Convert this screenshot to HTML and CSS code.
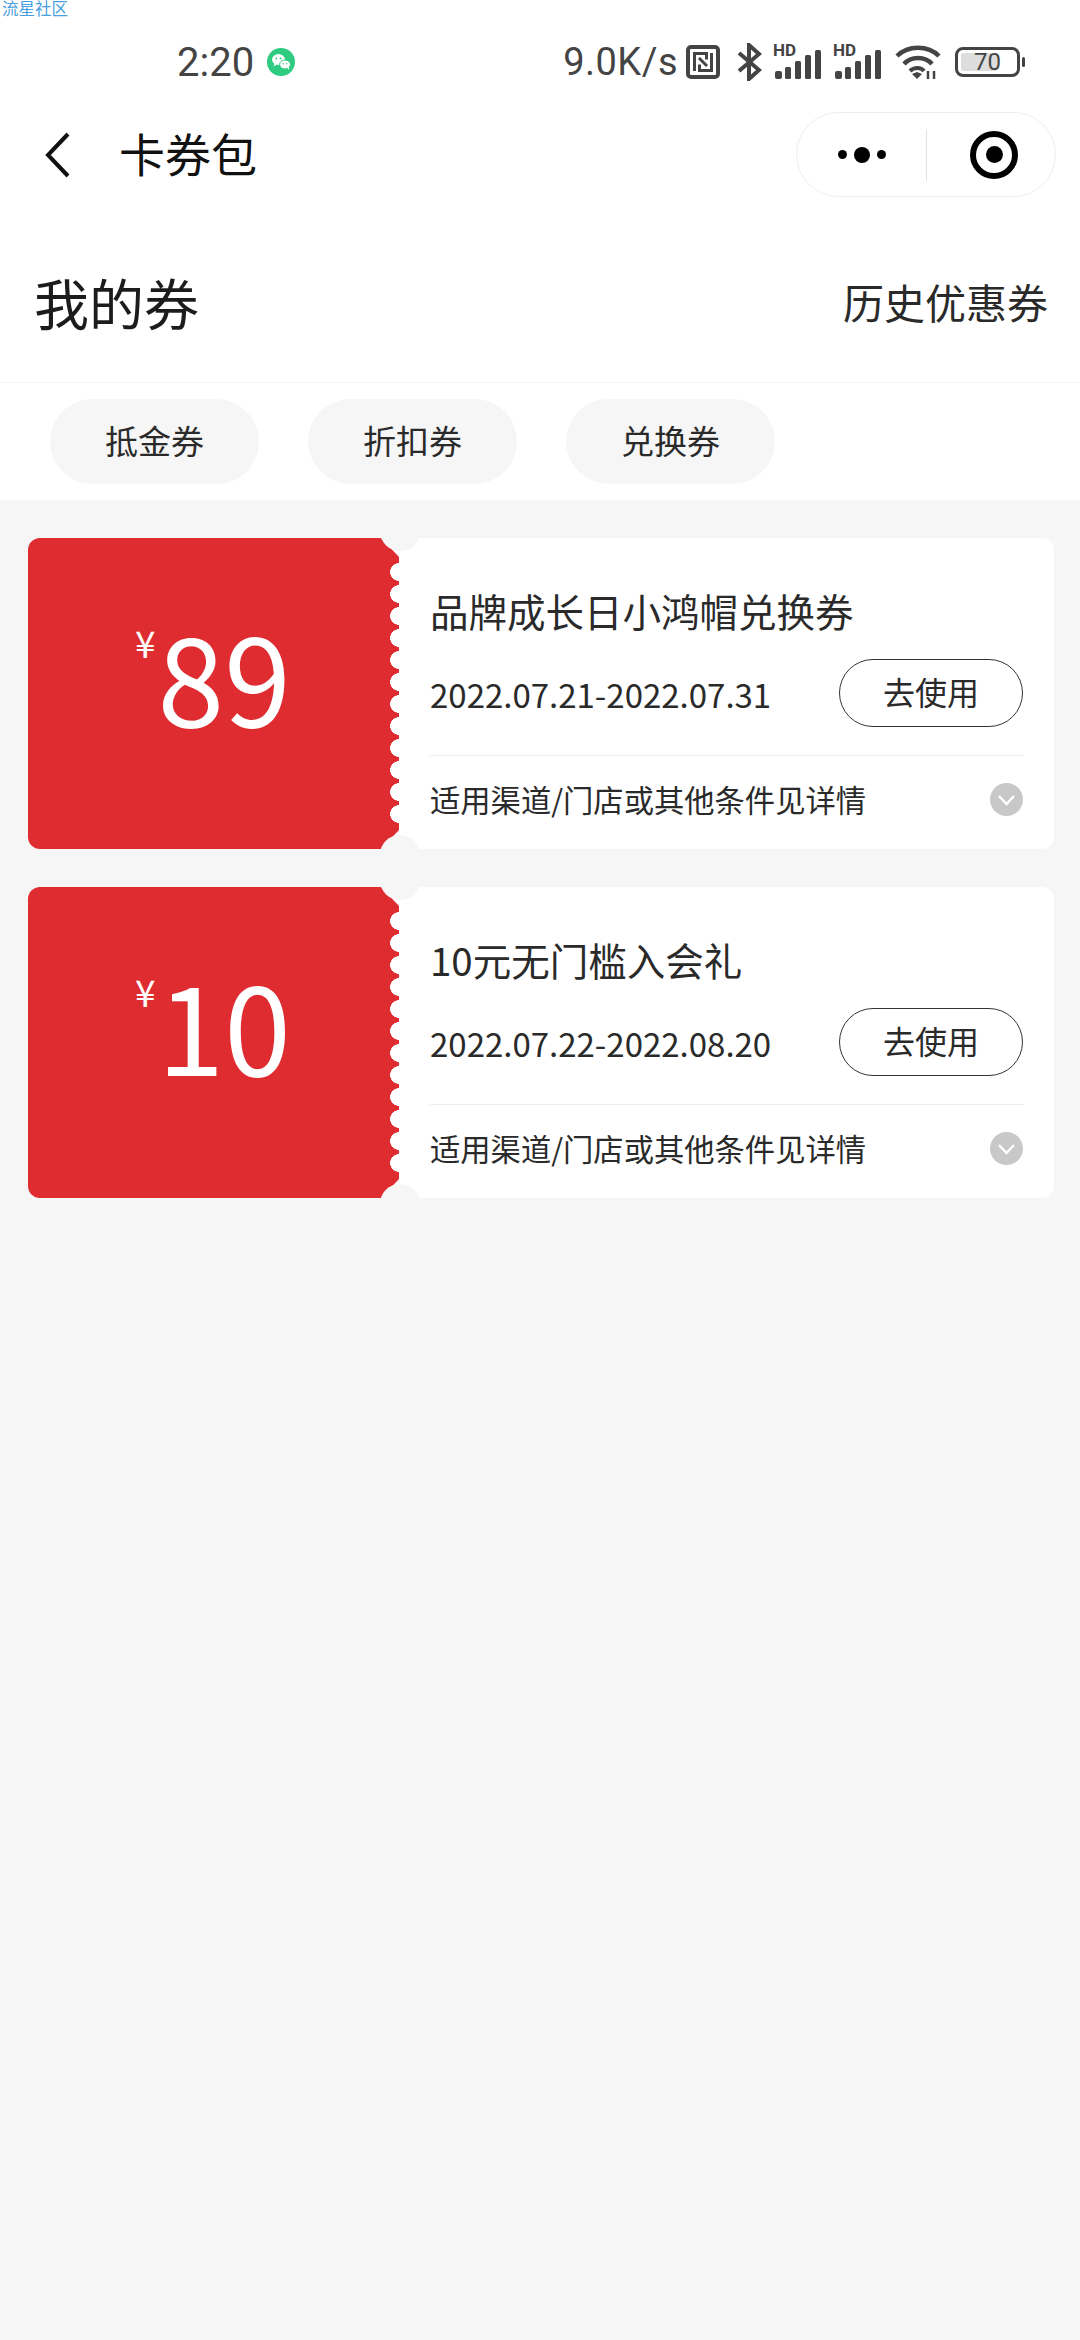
FILE: index.html
```html
<!DOCTYPE html>
<html lang="zh-CN">
<head>
    <meta charset="UTF-8">
    <meta name="viewport" content="width=device-width, initial-scale=1.0">
    <title>卡券包</title>
    <link rel="stylesheet" href="styles.css">
</head>
<body>
    <div class="watermark">流星社区</div>

    <div class="status-bar">
        <div class="status-left">
            <span class="status-time">2:20</span>
            <svg class="wechat-dot" width="28" height="28" viewBox="0 0 28 28">
                <circle cx="14" cy="14" r="14" fill="#2ecb81"/>
                <ellipse cx="11.5" cy="11.5" rx="6.5" ry="5.4" fill="#fff"/>
                <path d="M7.5 15.5l-1 3 3.4-1.8z" fill="#fff"/>
                <ellipse cx="18" cy="16.5" rx="5.4" ry="4.5" fill="#fff" stroke="#2ecb81"/>
                <path d="M20.5 20l1.5 2-.2-3z" fill="#fff"/>
                <circle cx="9.3" cy="10.5" r=".9" fill="#2ecb81"/>
                <circle cx="13.6" cy="10.5" r=".9" fill="#2ecb81"/>
                <circle cx="16.2" cy="15.8" r=".7" fill="#2ecb81"/>
                <circle cx="19.8" cy="15.8" r=".7" fill="#2ecb81"/>
            </svg>
        </div>
        <div class="status-right">
            <span class="status-speed">9.0K/s</span>
            <svg class="icon-nfc" width="34" height="34" viewBox="0 0 34 34" fill="none" stroke="#444">
                <rect x="2" y="2" width="30" height="30" rx="3" stroke-width="4"/>
                <path d="M8.500 26V8.500h12v6M25.500 8v17.500h-12v-6M13 13l8 8" stroke-width="3"/>
            </svg>
            <svg class="icon-bt" width="25" height="38" viewBox="0 0 25 38" fill="none" stroke="#444" stroke-width="4">
                <path d="M2 10l20 17-10 9V2l10 9L2 28"/>
            </svg>
            <svg class="icon-signal" width="50" height="40" viewBox="0 0 50 40">
                <text x="1" y="16" class="signal-label">HD</text>
                <g fill="#444">
                    <rect x="3" y="31" width="7" height="8" rx="2"/>
                    <rect x="13" y="27" width="6" height="12" rx="1.500"/>
                    <rect x="23" y="21" width="6" height="18" rx="1.500"/>
                    <rect x="33" y="15" width="6" height="24" rx="1.500"/>
                    <rect x="43" y="10" width="6" height="29" rx="1.500"/>
                </g>
            </svg>
            <svg class="icon-signal" width="50" height="40" viewBox="0 0 50 40">
                <text x="1" y="16" class="signal-label">HD</text>
                <g fill="#444">
                    <rect x="3" y="31" width="7" height="8" rx="2"/>
                    <rect x="13" y="27" width="6" height="12" rx="1.500"/>
                    <rect x="23" y="21" width="6" height="18" rx="1.500"/>
                    <rect x="33" y="15" width="6" height="24" rx="1.500"/>
                    <rect x="43" y="10" width="6" height="29" rx="1.500"/>
                </g>
            </svg>
            <svg class="icon-wifi" width="46" height="36" viewBox="0 0 46 36" fill="none" stroke="#444" stroke-width="4.500">
                <path d="M2 12C13 1 33 1 44 12"/>
                <path d="M9 20C16 12 30 12 37 20"/>
                <path d="M15 27c4-4 11-4 14 0" stroke-width="4"/>
                <path d="M17 30l5-2 5 2-5 5z" fill="#444" stroke="none"/>
                <path d="M33 35v-8M39 35v-8" stroke-width="2.500"/>
            </svg>
            <div class="battery">
                <div class="battery-body">
                    <span class="battery-fill"></span>
                    <span class="battery-text">70</span>
                </div>
                <span class="battery-tip"></span>
            </div>
        </div>
    </div>

    <div class="nav-bar">
        <svg class="nav-back" width="27" height="46" viewBox="0 0 27 46" fill="none" stroke="#111" stroke-width="4">
            <path d="M24 2L4 23l20 21"/>
        </svg>
        <span class="nav-title">卡券包</span>
        <div class="capsule">
            <div class="capsule-dots">
                <span class="dot"></span>
                <span class="dot dot-big"></span>
                <span class="dot"></span>
            </div>
            <span class="capsule-line"></span>
            <div class="capsule-target"><span></span></div>
        </div>
    </div>

    <div class="page-head">
        <h1>我的券</h1>
        <span class="history-link">历史优惠券</span>
    </div>

    <div class="tabs">
        <span class="tab">抵金券</span>
        <span class="tab">折扣券</span>
        <span class="tab">兑换券</span>
    </div>

    <div class="coupon-list">
        <div class="coupon">
            <div class="coupon-face">
                <span class="currency">¥</span>
                <span class="amount">89</span>
            </div>
            <div class="coupon-info">
                <div class="coupon-name">品牌成长日小鸿帽兑换券</div>
                <div class="coupon-row">
                    <span class="coupon-date">2022.07.21-2022.07.31</span>
                    <span class="use-btn">去使用</span>
                </div>
                <div class="coupon-foot">
                    <span>适用渠道/门店或其他条件见详情</span>
                    <svg width="33" height="33" viewBox="0 0 33 33">
                        <circle cx="16.500" cy="16.500" r="16.500" fill="#c8c8c8"/>
                        <path d="M9 13l7.500 8 7.500-8" fill="none" stroke="#fff" stroke-width="2.500"/>
                    </svg>
                </div>
            </div>
        </div>

        <div class="coupon">
            <div class="coupon-face">
                <span class="currency">¥</span>
                <span class="amount">10</span>
            </div>
            <div class="coupon-info">
                <div class="coupon-name">10元无门槛入会礼</div>
                <div class="coupon-row">
                    <span class="coupon-date">2022.07.22-2022.08.20</span>
                    <span class="use-btn">去使用</span>
                </div>
                <div class="coupon-foot">
                    <span>适用渠道/门店或其他条件见详情</span>
                    <svg width="33" height="33" viewBox="0 0 33 33">
                        <circle cx="16.500" cy="16.500" r="16.500" fill="#c8c8c8"/>
                        <path d="M9 13l7.500 8 7.500-8" fill="none" stroke="#fff" stroke-width="2.500"/>
                    </svg>
                </div>
            </div>
        </div>
    </div>
</body>
</html>
```

FILE: styles.css
```css
* {
    box-sizing: border-box;
}
body {
    margin: 0;
    height: 2340px;
    background-color: #f6f6f6;
    font-family: "Noto Sans CJK SC", "Noto Sans", sans-serif;
    color: #2a2a2a;
    position: relative;
    overflow: hidden;
}
.watermark {
    position: absolute;
    left: 2px;
    top: -2px;
    font-size: 16.500px;
    line-height: 20px;
    color: #4a9fe0;
}

/* status bar */
.status-bar {
    height: 112px;
    padding: 12px 55px 0 177px;
    background: white;
    display: flex;
    align-items: center;
    justify-content: space-between;
    font-family: Roboto, "Noto Sans", sans-serif;
    color: #444;
}
.status-left {
    display: flex;
    align-items: center;
    gap: 13px;
}
.status-time {
    font-size: 40px;
}
.status-right {
    display: flex;
    align-items: center;
}
.status-speed {
    font-size: 38px;
    letter-spacing: 0.5px;
    margin-right: 8px;
}
.icon-bt {
    margin-left: 17px;
}
.icon-signal {
    margin-left: 10px;
    margin-top: -4px;
}
.icon-wifi {
    margin-left: 13px;
}
.signal-label {
    font-family: Roboto, sans-serif;
    font-size: 17px;
    font-weight: 700;
    fill: #444;
}
.battery {
    margin-left: 14px;
    display: flex;
    align-items: center;
    gap: 2px;
}
.battery-body {
    width: 65px;
    height: 30px;
    border: 3px solid #444;
    border-radius: 8px;
    position: relative;
    display: flex;
    align-items: center;
    justify-content: center;
}
.battery-fill {
    position: absolute;
    left: 3px;
    top: 3px;
    bottom: 3px;
    width: 36px;
    background: #ddd;
    border-radius: 2px;
}
.battery-text {
    position: relative;
    font-size: 24px;
    line-height: 24px;
}
.battery-tip {
    width: 3px;
    height: 10px;
    background: #444;
    border-radius: 2px;
}

/* nav */
.nav-bar {
    height: 85px;
    background: white;
    padding: 0 24px 0 44px;
    display: flex;
    align-items: center;
}
.nav-title {
    margin-left: 48px;
    margin-top: -5px;
    font-size: 46px;
    color: #111;
}
.capsule {
    margin-left: auto;
    width: 260px;
    height: 85px;
    border: 1px solid #eee;
    border-radius: 43px;
    display: flex;
    align-items: center;
}
.capsule-dots {
    width: 129px;
    display: flex;
    align-items: center;
    justify-content: center;
    gap: 7px;
}
.dot {
    width: 9px;
    height: 9px;
    border-radius: 50%;
    background: black;
}
.dot-big {
    width: 16px;
    height: 16px;
}
.capsule-line {
    width: 1px;
    height: 52px;
    background: #e2e2e2;
}
.capsule-target {
    margin-left: 43px;
    width: 48px;
    height: 48px;
    border: 6px solid black;
    border-radius: 50%;
    display: flex;
    align-items: center;
    justify-content: center;
}
.capsule-target span {
    width: 17px;
    height: 17px;
    background: black;
    border-radius: 50%;
}

/* heading + tabs */
.page-head {
    height: 186px;
    padding: 28px 32px 0 34px;
    background: white;
    border-bottom: 1px solid #f4f4f4;
    display: flex;
    align-items: flex-start;
    justify-content: space-between;
}
.page-head h1 {
    margin: 0;
    font-size: 55px;
    font-weight: 400;
    line-height: 153px;
    color: #1c1c1c;
}
.history-link {
    font-size: 41px;
    line-height: 153px;
}
.tabs {
    height: 117px;
    padding: 14px 50px 0;
    background: white;
    display: flex;
    gap: 49px;
}
.tab {
    width: 209px;
    height: 85px;
    margin-top: 2px;
    border-radius: 43px;
    background: #f6f6f6;
    font-size: 33px;
    line-height: 83px;
    text-align: center;
}

/* coupons */
.coupon-list {
    padding: 38px 26px 0 28px;
    display: flex;
    flex-direction: column;
    gap: 38px;
}
.coupon {
    height: 311px;
    background: white;
    border-radius: 12px;
    position: relative;
    display: flex;
}
.coupon::before,
.coupon::after {
    content: "";
    position: absolute;
    left: 352px;
    width: 40px;
    height: 40px;
    border-radius: 50%;
    background: #f6f6f6;
    z-index: 1;
}
.coupon::before {
    top: -27px;
}
.coupon::after {
    bottom: -26px;
}
.coupon-face {
    width: 371px;
    flex-shrink: 0;
    background: #de2c31;
    border-radius: 12px 0 0 12px;
    clip-path: polygon(0 0, 353px 0, 371px 19px, 371px 292px, 353px 311px, 0 311px);
    color: white;
    position: relative;
    display: flex;
    align-items: flex-start;
    padding: 72px 0 0 107px;
}
.coupon-face::after {
    content: "";
    position: absolute;
    right: 0;
    top: 23px;
    width: 9px;
    height: 264px;
    background: radial-gradient(circle 9px at 100% 50%, white 96%, transparent 100%) 0 0 / 9px 22px repeat-y;
}
.currency {
    font-size: 37px;
    line-height: 50px;
    margin-top: 7px;
}
.amount {
    font-size: 120px;
    font-weight: 400;
    line-height: 130px;
    margin-left: 2px;
}
.coupon-info {
    flex: 1;
    padding: 48px 31px 0;
}
.coupon-name {
    font-size: 38.500px;
    line-height: 48px;
}
.coupon-row {
    margin-top: 25px;
    height: 68px;
    display: flex;
    align-items: center;
    justify-content: space-between;
}
.coupon-date {
    font-size: 33px;
    margin-top: 2px;
}
.use-btn {
    width: 184px;
    height: 68px;
    border: 1px solid #333;
    border-radius: 34px;
    font-size: 32px;
    line-height: 63px;
    text-align: center;
}
.coupon-foot {
    margin-top: 28px;
    height: 89px;
    padding-bottom: 2px;
    border-top: 1px dotted #ddd;
    font-size: 30.300px;
    display: flex;
    align-items: center;
    justify-content: space-between;
}
```
